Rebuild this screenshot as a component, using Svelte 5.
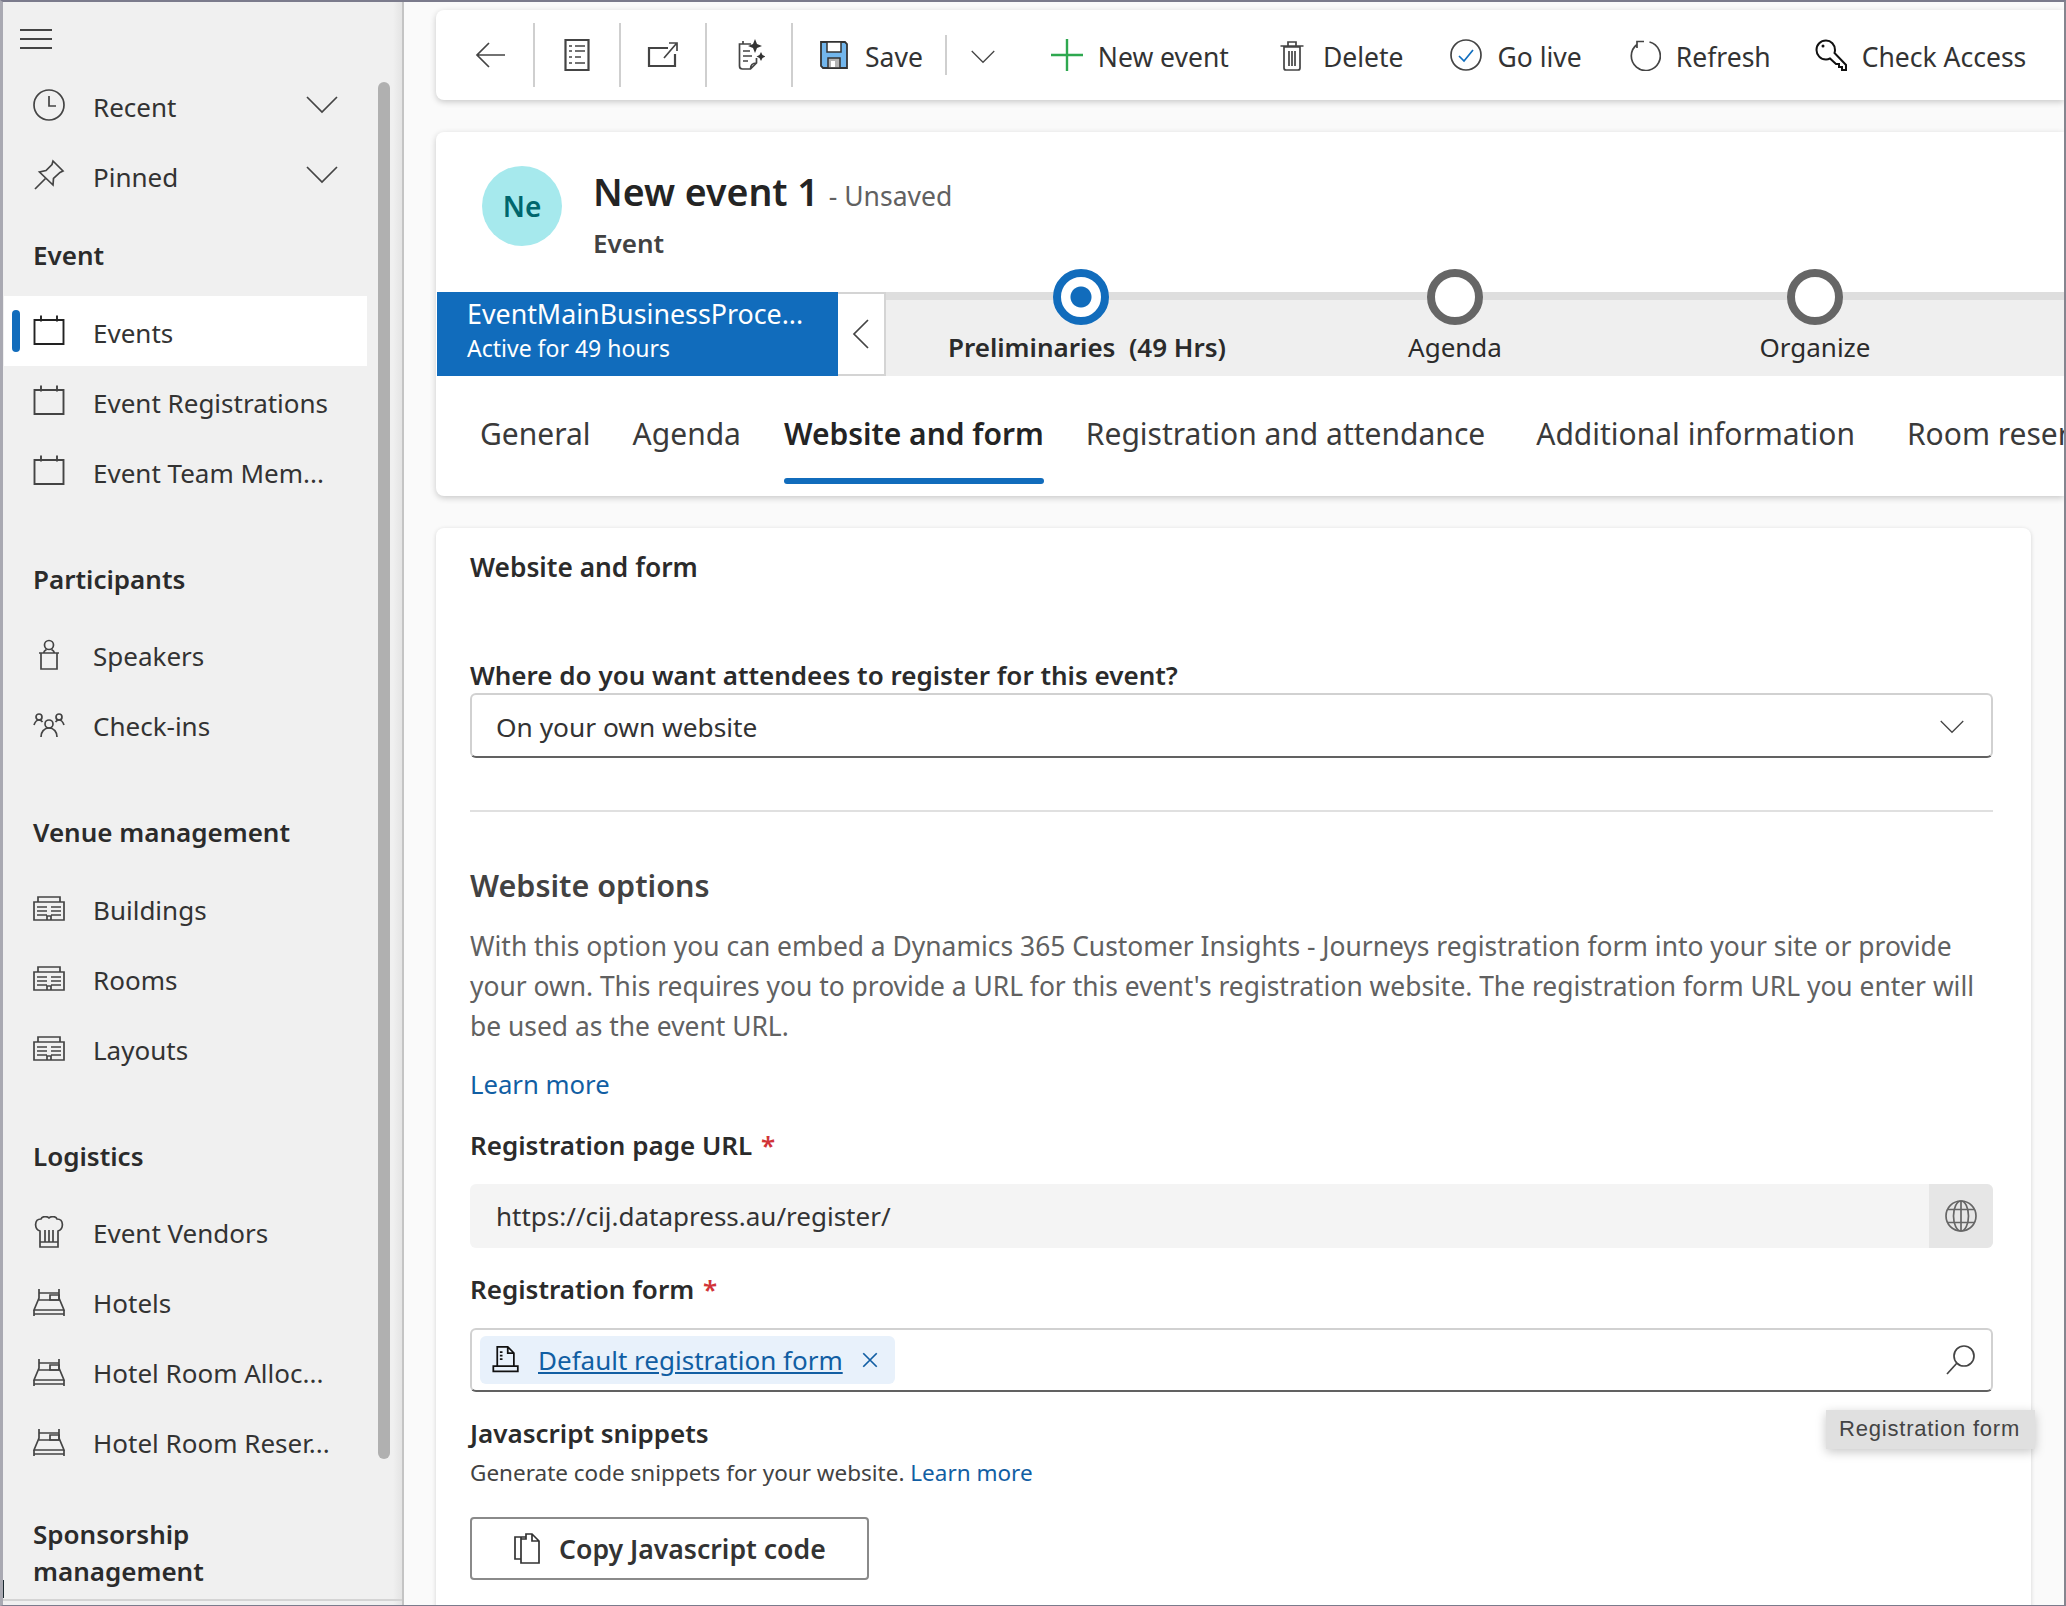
<script>
    const ICONS = {
        clock: '<circle cx="16" cy="16" r="15"/><path d="M16 7v10h7"/>',
        pin: '<path d="M20 2l10 10-3 1.5-6.5 6-.5 6.500L6.500 13l6.500-1.500 6-6z"/><path d="M2 30l10.500-10.500"/>',
        calendar: '<path stroke-width="1.900" d="M1.500 5h29v24h-29zM8 .5v6M24 .5v6"/>',
        speaker: '<circle cx="16" cy="6" r="4.500"/><path d="M6 14h20M8 14v16h16V14M10.500 14c.5-2 2-3 3-3.500M21.500 14c-.5-2-2-3-3-3.500"/>',
        people: '<circle cx="16" cy="15" r="4"/><circle cx="6" cy="8" r="3"/><circle cx="26" cy="8" r="3"/><path d="M8 28c0-5 3-9 8-9s8 4 8 9M1 16c1-3 2.500-5 5-5 1.500 0 2.500.5 3.500 2M31 16c-1-3-2.500-5-5-5-1.500 0-2.500.5-3.500 2"/>',
        building: '<path d="M1 28V10h4V5h22v5h4v18zM5 10h22M4 15h10M4 19h10M4 23h10M18 15h10M18 19h10M18 23h10M14 28v-4h4v4"/>',
        chef: '<path d="M7 15C1 13 1 3 8 3c1-3 6-3 8-1 2-2 7-2 8 1 7 0 7 10 1 12v16H7zM7 26h18M12 14v12M16 14v12M20 14v12"/>',
        bed: '<path d="M6 3v9L1 24h30l-5-12V3M6 7h20M1 24v6M31 24v6M1 28h30M6 14h20"/><path d="M17 9h9v5h-9z"/>',
        chevron: '<path d="M1 8l15 15L31 8"/>',
        back: '<path d="M30 16H2M14 4L2 16l12 12"/>',
        list: '<path stroke-width="2.200" d="M4.500 1h23v30h-23z"/><path d="M8 7h3M14 7h10M8 12h3M14 12h10M8 18h3M14 18h6M8 24h3M14 24h10"/>',
        open: '<path stroke-width="2.200" d="M21 9H2v18h26V15"/><path d="M17 19L29 5M22 4h8v8"/>',
        copilot: '<path d="M18 5H6.500v22c0 2 1 3 3 3h8l6-6v-5M17.500 30c0-4 2-6 6-6M10 12h7M10 17h9M10 22h5M10 5V2"/><path fill="#333" stroke="none" d="M22 0l2 5 5 2-5 2-2 5-2-5-5-2 5-2zM28 13l1.500 3 3 1.500-3 1.500-1.500 3-1.500-3-3-1.500 3-1.500z"/>',
        save: '<path fill="#72b6ec" stroke="#333" stroke-width="1.800" d="M3 3h24l2 2v24H5l-2-2z"/><path fill="#fff" stroke="#333" stroke-width="1.500" d="M9 3h14v10H9z"/><path fill="#b4b4b4" stroke="#333" stroke-width="1.500" d="M10 19h12v10H10z"/><path fill="#fff" stroke="none" d="M13 22h4v6h-4z"/>',
        plus: '<path stroke="#2ea84f" stroke-width="2.400" d="M16 0v32M0 16h32"/>',
        trash: '<path d="M8 8h16v21c0 1.200-.8 2-2 2H10c-1.200 0-2-.8-2-2zM4.500 7h23M12 7V3h8v4M13 12v15M16 12v15M19 12v15"/>',
        golive: '<circle cx="16" cy="16" r="15"/><path stroke="#106ebe" d="M9 17l5 5 9-11"/>',
        refresh: '<path d="M20.500 3A14.500 14.500 0 1 1 8 5.500M8 9V2.500h7"/>',
        key: '<path stroke="#111" stroke-width="2" d="M11 1.500c5 0 9 4 9 9.500 0 1-.2 2-.5 3L31 26v5h-4v-3h-3v-3h-3l-6-5.500c-2 1-3 1-4 1-5.500 0-9.500-4.500-9.500-9.500C1.500 5.500 5.500 1.500 11 1.500z"/><circle cx="8" cy="7" r="1.500" fill="#111" stroke="none"/>',
        left: '<path d="M23 2L9 16l14 14"/>',
        globe: '<circle cx="16" cy="16" r="15"/><ellipse cx="16" cy="16" rx="7.500" ry="15"/><path d="M3 9.500h26M3 22.500h26M16 1v30"/>',
        search: '<circle cx="19" cy="12" r="10"/><path d="M12 19L2 30"/>',
        close: '<path stroke-width="3" d="M4 4l24 24M28 4L4 28"/>',
        form: '<path stroke="#111" stroke-width="2" d="M6 23V1h12l7 7v15M1.500 23h28v6h-28zM18 1v7h7"/><path stroke="#111" stroke-width="2" d="M9 7h3M9 11h3M9 15h3"/>',
        copy: '<path d="M14 1h6l7 7v22H9V6h5zM20 1v7h7M9 6V4h5M9 26H3V4h6"/>'
    };

    const GROUPS = [
        {
            title: 'Event',
            items: [
                { label: 'Events', icon: 'calendar', active: true },
                { label: 'Event Registrations', icon: 'calendar' },
                { label: 'Event Team Mem...', icon: 'calendar' }
            ]
        },
        {
            title: 'Participants',
            items: [
                { label: 'Speakers', icon: 'speaker' },
                { label: 'Check-ins', icon: 'people' }
            ]
        },
        {
            title: 'Venue management',
            items: [
                { label: 'Buildings', icon: 'building' },
                { label: 'Rooms', icon: 'building' },
                { label: 'Layouts', icon: 'building' }
            ]
        },
        {
            title: 'Logistics',
            items: [
                { label: 'Event Vendors', icon: 'chef' },
                { label: 'Hotels', icon: 'bed' },
                { label: 'Hotel Room Alloc...', icon: 'bed' },
                { label: 'Hotel Room Reser...', icon: 'bed' }
            ]
        }
    ];

    const TABS = ['General', 'Agenda', 'Website and form', 'Registration and attendance', 'Additional information', 'Room reservations'];

    const COMMANDS = [
        { label: 'New event', icon: 'plus' },
        { label: 'Delete', icon: 'trash' },
        { label: 'Go live', icon: 'golive' },
        { label: 'Refresh', icon: 'refresh' },
        { label: 'Check Access', icon: 'key' }
    ];
</script>

{#snippet icon(name, cls = '')}
    <svg class="icon {cls}" viewBox="0 0 32 32" fill="none" stroke="currentColor" stroke-width="1.700">{@html ICONS[name]}</svg>
{/snippet}

<div class="window">
    <aside class="sidebar">
        <button class="burger" aria-label="Menu"><span></span><span></span><span></span></button>

        <div class="row">
            {@render icon('clock')}
            <span class="row-label">Recent</span>
            {@render icon('chevron', 'row-chevron')}
        </div>
        <div class="row">
            {@render icon('pin')}
            <span class="row-label">Pinned</span>
            {@render icon('chevron', 'row-chevron')}
        </div>

        {#each GROUPS as group, i}
            <h3 class="group-title" class:first={i === 0}>{group.title}</h3>
            {#each group.items as item}
                <div class="row" class:active={item.active}>
                    {@render icon(item.icon)}
                    <span class="row-label">{item.label}</span>
                </div>
            {/each}
        {/each}
        <h3 class="group-title two-line">Sponsorship<br />management</h3>

        <div class="scrollbar"></div>
        <div class="sidebar-foot"></div>
    </aside>

    <main class="main">
        <div class="commandbar">
            <button class="icon-cell">{@render icon('back')}</button>
            <button class="icon-cell">{@render icon('list')}</button>
            <button class="icon-cell">{@render icon('open')}</button>
            <button class="icon-cell">{@render icon('copilot')}</button>
            <button class="cmd save">{@render icon('save')}<span>Save</span></button>
            <button class="cmd-chevron" aria-label="More save options">{@render icon('chevron')}</button>
            {#each COMMANDS as cmd}
                <button class="cmd">{@render icon(cmd.icon)}<span>{cmd.label}</span></button>
            {/each}
        </div>

        <section class="header-card">
            <div class="record">
                <div class="avatar">Ne</div>
                <div>
                    <div class="record-title">
                        <h1>New event 1</h1>
                        <span class="unsaved">- Unsaved</span>
                    </div>
                    <div class="record-type">Event</div>
                </div>
            </div>

            <div class="process">
                <div class="process-flag">
                    <div class="flag-name">EventMainBusinessProce...</div>
                    <div class="flag-sub">Active for 49 hours</div>
                </div>
                <button class="process-collapse">{@render icon('left')}</button>
                <div class="stages">
                    <div class="stage current">
                        <div class="dot"></div>
                        <div class="stage-label">Preliminaries&nbsp; (49 Hrs)</div>
                    </div>
                    <div class="stage">
                        <div class="dot"></div>
                        <div class="stage-label">Agenda</div>
                    </div>
                    <div class="stage">
                        <div class="dot"></div>
                        <div class="stage-label">Organize</div>
                    </div>
                </div>
            </div>

            <nav class="tabs">
                {#each TABS as tab, i}
                    <div class="tab" class:selected={i === 2}>{tab}</div>
                {/each}
            </nav>
        </section>

        <section class="form-card">
            <h2 class="form-title">Website and form</h2>

            <label class="field-label where">Where do you want attendees to register for this event?</label>
            <div class="select">
                <span>On your own website</span>
                {@render icon('chevron')}
            </div>

            <hr class="divider" />

            <h2 class="options-title">Website options</h2>
            <p class="options-text">With this option you can embed a Dynamics 365 Customer Insights - Journeys registration form into your site or provide your own. This requires you to provide a URL for this event's registration website. The registration form URL you enter will be used as the event URL.</p>
            <a class="learn" href="#learn">Learn more</a>

            <label class="field-label url-label">Registration page URL <span class="req">*</span></label>
            <div class="url-input">
                <span class="url-value">https://cij.datapress.au/register/</span>
                <span class="url-addon">{@render icon('globe')}</span>
            </div>

            <label class="field-label form-label">Registration form <span class="req">*</span></label>
            <div class="lookup">
                <span class="chip">
                    {@render icon('form')}
                    <a href="#form">Default registration form</a>
                    {@render icon('close', 'chip-close')}
                </span>
                {@render icon('search', 'lookup-search')}
            </div>

            <h4 class="snippet-title">Javascript snippets</h4>
            <p class="snippet-text">Generate code snippets for your website. <a href="#more">Learn more</a></p>
            <button class="copy-btn">{@render icon('copy')}<span>Copy Javascript code</span></button>
        </section>

        <div class="tooltip">Registration form</div>
    </main>
    <div class="corner-mark"></div>
</div>

<style>
    :global(body) {
        margin: 0;
        background: #fff;
    }

    * {
        box-sizing: border-box;
    }

    .window {
        position: relative;
        width: 2066px;
        height: 1606px;
        display: flex;
        overflow: hidden;
        border-top: 2px solid #7b7b8c;
        border-bottom: 1px solid #7b7b8c;
        border-right: 2px solid #85858f;
        border-left: 3px solid #a9a9b2;
        font-family: "Noto Sans", "Open Sans", sans-serif;
        color: #333;
    }

    /* dark notch the screenshot has on the window edge */
    .corner-mark {
        position: absolute;
        left: 0;
        bottom: 7px;
        width: 1px;
        height: 18px;
        background: #1c2a30;
    }

    button {
        font: inherit;
        color: inherit;
        background: none;
        border: 0;
        padding: 0;
    }

    .icon {
        width: 32px;
        height: 32px;
        flex: none;
        color: #444;
    }

    /* sidebar */
    .sidebar {
        position: relative;
        flex: none;
        width: 401px;
        height: 100%;
        overflow: hidden;
        background: linear-gradient(to right, #f0f0f0 390px, #e4e4e4 399px);
        border-right: 2px solid #c4c4c4;
    }

    .burger {
        display: flex;
        flex-direction: column;
        gap: 7px;
        width: 32px;
        height: 68px;
        margin-left: 17px;
        padding-top: 27px;
    }
    .burger span {
        height: 2px;
        background: #444;
    }

    .row {
        position: relative;
        display: flex;
        align-items: center;
        gap: 28px;
        height: 70px;
        width: 363px;
        margin-left: 1px;
        padding-left: 29px;
    }
    .row-label {
        font-size: 26px;
        line-height: 36px;
        padding-top: 3px;
        white-space: nowrap;
    }
    .row.active {
        background: #fff;
    }
    .row.active .icon {
        color: #222;
    }
    .row.active::before {
        content: '';
        position: absolute;
        left: 8px;
        top: 14px;
        width: 8px;
        height: 42px;
        border-radius: 4px;
        background: #116cbc;
    }
    :global(.row-chevron) {
        position: absolute;
        right: 29px;
    }

    .group-title {
        height: 80px;
        margin: 33.500px 0 0;
        padding: 21px 0 0 30px;
        font-size: 26px;
        line-height: 37px;
        font-weight: 600;
        color: #2b2b2b;
    }
    .group-title.first {
        margin-top: 6px;
    }
    .group-title.two-line {
        height: auto;
        margin-top: 18.500px;
    }

    .scrollbar {
        position: absolute;
        left: 375px;
        top: 80px;
        width: 12px;
        height: 1377px;
        border-radius: 6px;
        background: #b0b0b0;
    }
    .sidebar-foot {
        position: absolute;
        left: 0;
        right: 0;
        bottom: 4px;
        height: 2px;
        background: #d4d4d4;
    }

    /* right side */
    .main {
        position: relative;
        flex: 1;
        min-width: 0;
        height: 100%;
        background: #fafafa;
        overflow: hidden;
        padding: 8px 0 0 32px;
    }

    .commandbar {
        display: flex;
        align-items: center;
        height: 90px;
        padding-left: 13px;
        background: #fff;
        border-radius: 8px 0 0 8px;
        box-shadow: 0 2px 6px rgba(0, 0, 0, 0.2);
        white-space: nowrap;
        font-size: 26.500px;
    }
    .commandbar span {
        padding-top: 4px;
    }
    .icon-cell {
        display: flex;
        align-items: center;
        justify-content: center;
        width: 86px;
        height: 64px;
        border-right: 2px solid #cfcfcf;
    }
    .cmd {
        display: flex;
        align-items: center;
        gap: 15px;
        margin-left: 47px;
    }
    .cmd:last-child {
        margin-left: 44px;
    }
    .cmd.save {
        margin-left: 25px;
        padding-right: 22px;
    }
    .cmd-chevron {
        display: flex;
        align-items: center;
        height: 40px;
        padding: 4px 0 0 24px;
        margin-right: 9px;
        border-left: 2px solid #cfcfcf;
    }
    .cmd-chevron :global(.icon) {
        width: 24px;
        height: 24px;
    }

    .header-card {
        height: 364px;
        margin-top: 32px;
        background: #fff;
        border-radius: 8px 0 0 8px;
        box-shadow: 0 2px 6px rgba(0, 0, 0, 0.2);
        overflow: hidden;
    }
    .record {
        display: flex;
        gap: 31px;
        height: 160px;
        padding: 34px 0 0 46px;
    }
    .avatar {
        flex: none;
        width: 80px;
        height: 80px;
        border-radius: 50%;
        background: #a6e9ed;
        color: #00666d;
        font-size: 28px;
        font-weight: 600;
        line-height: 80px;
        text-align: center;
    }
    .record-title {
        display: flex;
        align-items: baseline;
        gap: 10px;
        margin-top: -2px;
    }
    h1 {
        margin: 0;
        font-size: 37.500px;
        line-height: 56px;
        font-weight: 600;
        color: #242424;
    }
    .unsaved {
        font-size: 26.500px;
        color: #616161;
    }
    .record-type {
        margin-top: 5px;
        font-size: 26px;
        line-height: 36px;
        font-weight: 600;
        color: #424242;
    }

    .process {
        display: flex;
        height: 84px;
        margin-left: 1px;
    }
    .process-flag {
        flex: none;
        width: 401px;
        padding: 4px 0 0 30px;
        background: #116cbc;
        color: #fff;
    }
    .flag-name {
        font-size: 26.800px;
        line-height: 36px;
    }
    .flag-sub {
        font-size: 23px;
        line-height: 32px;
    }
    .process-collapse {
        display: flex;
        align-items: center;
        justify-content: center;
        flex: none;
        width: 48px;
        border: 2px solid #d4d4d4;
        border-left: 0;
        background: #fff;
    }
    .stages {
        flex: 1;
        display: grid;
        grid-template-columns: 390px 358px 362px;
        background: linear-gradient(to bottom, #dedede 8px, #efefef 8px);
    }
    .stage {
        display: flex;
        flex-direction: column;
        align-items: center;
    }
    .dot {
        width: 56px;
        height: 56px;
        margin-top: -23px;
        border-radius: 50%;
        border: 8px solid #666;
        background: #fff;
    }
    .stage.current .dot {
        border-color: #116cbc;
        background: radial-gradient(circle, #116cbc 10px, #fff 11px);
    }
    .stage-label {
        margin-top: 4px;
        font-size: 26px;
        line-height: 36px;
        color: #2b2b2b;
        white-space: nowrap;
    }
    .stage.current .stage-label {
        margin-left: 12px;
        font-weight: 600;
    }

    .tabs {
        display: flex;
        gap: 43px;
        height: 120px;
        padding-left: 44px;
        white-space: nowrap;
    }
    .tab {
        position: relative;
        font-size: 30px;
        line-height: 116px;
        color: #3a3a3a;
    }
    .tab:nth-child(2) {
        margin-left: -1px;
    }
    .tab:nth-child(4) {
        margin-left: -1px;
    }
    .tab:nth-child(5) {
        margin-left: 8px;
    }
    .tab:nth-child(6) {
        margin-left: 9px;
    }
    .tab.selected {
        font-weight: 600;
        color: #242424;
    }
    .tab.selected::after {
        content: '';
        position: absolute;
        left: 0;
        right: 0;
        bottom: 12px;
        height: 6px;
        border-radius: 3px;
        background: #116cbc;
    }

    .form-card {
        position: relative;
        width: 1595px;
        height: 1200px;
        margin-top: 32px;
        padding: 0 34px;
        background: #fff;
        border-radius: 8px;
        box-shadow: 0 1px 4px rgba(0, 0, 0, 0.16);
    }
    .form-title {
        margin: 0;
        padding-top: 21px;
        font-size: 26.300px;
        line-height: 36px;
        font-weight: 600;
        color: #2b2b2b;
    }
    .field-label {
        display: block;
        font-size: 26px;
        line-height: 36px;
        font-weight: 600;
        color: #2b2b2b;
    }
    .where {
        margin-top: 72px;
    }
    .select,
    .lookup {
        position: relative;
        display: flex;
        align-items: center;
        justify-content: space-between;
        width: 1523px;
        border: 2px solid #d1d1d1;
        border-bottom-color: #616161;
        border-radius: 6px;
    }
    .select {
        height: 65px;
        padding: 2px 27px 0 24px;
        font-size: 26.300px;
    }
    .select :global(.icon) {
        width: 24px;
        height: 24px;
    }
    .divider {
        width: 1523px;
        margin: 52px 0 0;
        border: 0;
        border-top: 2px solid #e0e0e0;
    }
    .options-title {
        margin: 51px 0 0;
        font-size: 30.500px;
        line-height: 44px;
        font-weight: 600;
        color: #424242;
    }
    .options-text {
        width: 1523px;
        margin: 19px 0 0;
        font-size: 26.400px;
        line-height: 40px;
        color: #616161;
    }
    .learn {
        display: block;
        margin-top: 19px;
        font-size: 25.700px;
        line-height: 40px;
        color: #115ea3;
        text-decoration: none;
    }
    .req {
        margin-left: 2px;
        color: #d13438;
    }
    .url-label {
        margin-top: 22px;
    }
    .url-input {
        display: flex;
        align-items: center;
        justify-content: space-between;
        width: 1523px;
        height: 64px;
        margin-top: 21px;
        padding-left: 26px;
        border-radius: 6px;
        overflow: hidden;
        background: #f4f4f4;
        font-size: 26px;
    }
    .url-addon {
        display: flex;
        align-items: center;
        justify-content: center;
        width: 64px;
        height: 100%;
        background: #e6e6e6;
    }
    .url-addon :global(.icon) {
        color: #666;
    }
    .form-label {
        margin-top: 23px;
    }
    .lookup {
        height: 64px;
        margin-top: 21px;
        padding: 0 14px 0 8px;
    }
    .chip {
        display: flex;
        align-items: center;
        gap: 18px;
        height: 48px;
        padding: 0 16px 0 12px;
        border-radius: 6px;
        background: #e8f1fb;
        font-size: 26px;
    }
    .chip a {
        color: #115ea3;
    }
    .chip :global(.icon) {
        width: 28px;
        height: 28px;
    }
    .chip :global(.chip-close) {
        width: 18px;
        height: 18px;
        color: #115ea3;
    }
    :global(.lookup-search) {
        color: #616161;
    }
    .snippet-title {
        margin: 23px 0 0;
        font-size: 26px;
        line-height: 36px;
        font-weight: 600;
        color: #2b2b2b;
    }
    .snippet-text {
        margin: 4px 0 0;
        font-size: 22.500px;
        line-height: 36px;
        color: #424242;
    }
    .snippet-text a {
        color: #115ea3;
        text-decoration: none;
    }
    .copy-btn {
        display: flex;
        align-items: center;
        gap: 15px;
        width: 399px;
        height: 63px;
        margin-top: 26px;
        padding-left: 40px;
        border: 2px solid #8a8a8a;
        border-radius: 4px;
        font-size: 26.600px;
        font-weight: 600;
    }
    .copy-btn :global(.icon) {
        color: #333;
    }

    .tooltip {
        position: absolute;
        left: 1422px;
        top: 1408px;
        width: 209px;
        height: 39px;
        padding-left: 13px;
        background: #e0e0e0;
        box-shadow: 0 3px 10px rgba(0, 0, 0, 0.22);
        font-family: "Liberation Sans", sans-serif;
        font-size: 22px;
        line-height: 37px;
        letter-spacing: 0.800px;
        color: #444;
    }
</style>
